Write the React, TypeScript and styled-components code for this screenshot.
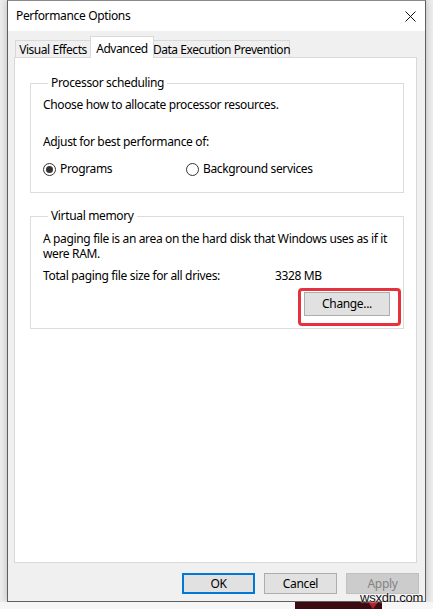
import React from "react";
import styled, { createGlobalStyle } from "styled-components";

const GlobalStyle = createGlobalStyle`
  html, body { margin: 0; padding: 0; }
  body {
    background: #ececec;
    font-family: "Noto Sans", "Liberation Sans", sans-serif;
    font-size: 12px;
    letter-spacing: -0.35px;
    color: #000;
  }
  * { box-sizing: border-box; }
`;

const Page = styled.div`
  position: relative;
  width: 433px;
  height: 609px;
  padding-left: 7px;
  display: flex;
  flex-direction: column;
  overflow: hidden;
`;

const Window = styled.div`
  width: 419px;
  height: 602px;
  border: 1px solid #5e5e5e;
  border-top-color: #8a8a8a;
  background: #f0f0f0;
  display: flex;
  flex-direction: column;
  box-shadow: 0 0 7px rgba(0, 0, 0, 0.22);
  flex: none;
`;

const TitleBar = styled.div`
  height: 30px;
  background: #fff;
  display: flex;
  align-items: center;
  justify-content: space-between;
  padding: 0 9px 0 8px;
  flex: none;
`;

const Title = styled.span`
  font-size: 12px;
  line-height: 16px;
`;

const Body = styled.div`
  padding: 6px 8px 0 6px;
  display: flex;
  flex-direction: column;
  flex: 1;
`;

const TabRow = styled.div`
  height: 21px;
  display: flex;
  align-items: flex-end;
  padding-left: 2px;
  position: relative;
  z-index: 1;
  margin-bottom: -1px;
`;

const Tab = styled.div<{ $active?: boolean; $w: number }>`
  width: ${(p) => p.$w}px;
  flex: none;
  white-space: nowrap;
  letter-spacing: -0.45px;
  height: ${(p) => (p.$active ? "22px" : "18px")};
  display: flex;
  align-items: center;
  justify-content: center;
  border: 1px solid #d9d9d9;
  border-bottom: ${(p) => (p.$active ? "none" : "1px solid #d9d9d9")};
  margin-left: -1px;
  background: ${(p) => (p.$active ? "#fff" : "#f0f0f0")};
  line-height: 16px;
  padding-top: 2px;
  position: relative;
  z-index: ${(p) => (p.$active ? 2 : 1)};
`;

const Panel = styled.div`
  height: 506px;
  background: #fff;
  border: 1px solid #d9d9d9;
  padding: 17px 12px 0 15px;
  display: flex;
  flex-direction: column;
`;

const Group = styled.fieldset<{ $gap?: number; $pt: number; $pb: number }>`
  margin: ${(p) => p.$gap ?? 0}px 0 0 0;
  border: 1px solid #dcdcdc;
  padding: ${(p) => p.$pt}px 13px ${(p) => p.$pb}px 12px;
  min-width: 0;
`;

const Legend = styled.legend`
  padding: 0 3px;
  margin-left: 5px;
  line-height: 16px;
  font-size: 12px;
`;

const Text = styled.p<{ $top?: number; $lh?: number }>`
  margin: ${(p) => p.$top ?? 0}px 0 0 0;
  line-height: ${(p) => p.$lh ?? 16}px;
`;

const RadioRow = styled.div`
  margin-top: 11px;
  display: grid;
  grid-template-columns: 143px auto;
  line-height: 16px;
`;

const RadioOption = styled.label`
  display: flex;
  align-items: center;
  gap: 4px;
`;

const RadioCircle = styled.span<{ $checked?: boolean }>`
  width: 13px;
  height: 13px;
  border-radius: 50%;
  border: 1px solid #333;
  background: #fff;
  display: flex;
  align-items: center;
  justify-content: center;
  flex: none;
  &::after {
    content: "";
    width: 7px;
    height: 7px;
    border-radius: 50%;
    background: ${(p) => (p.$checked ? "#333" : "transparent")};
  }
`;

const InfoRow = styled.div`
  margin-top: 7px;
  display: grid;
  grid-template-columns: 232px auto;
  line-height: 15px;
`;

const ButtonRow = styled.div`
  margin-top: 9px;
  display: flex;
  justify-content: flex-end;
`;

const Highlight = styled.div`
  position: relative;
  &::after {
    content: "";
    position: absolute;
    left: -6px;
    top: -4px;
    right: -11px;
    bottom: -10px;
    border: 3px solid #e5323d;
    border-radius: 4px;
    pointer-events: none;
  }
`;

const Button = styled.button<{ $w?: number; $h?: number; $default?: boolean }>`
  width: ${(p) => p.$w ?? 73}px;
  height: ${(p) => p.$h ?? 21}px;
  background: #e1e1e1;
  border: ${(p) => (p.$default ? "2px solid #0078d7" : "1px solid #adadad")};
  font-family: inherit;
  font-size: 12px;
  letter-spacing: inherit;
  color: #000;
  padding: 0;
  line-height: 16px;
  &:disabled {
    background: #cccccc;
    border-color: #bfbfbf;
    color: #838383;
  }
`;

const Footer = styled.div`
  display: flex;
  justify-content: flex-end;
  gap: 9px;
  padding: 9px 6px 7px 0;
  flex: none;
`;

const BottomStrip = styled.div`
  height: 7px;
  display: flex;
  background: #f6f6f6;
  margin-left: -7px;
  width: 433px;
`;

const DarkBlock = styled.div`
  margin-left: 295px;
  width: 87px;
  background: #3a0c12;
  position: relative;
  &::after {
    content: "";
    position: absolute;
    left: 73px;
    top: 0;
    border-left: 5px solid transparent;
    border-right: 5px solid transparent;
    border-top: 7px solid #b0202c;
  }
`;

const Watermark = styled.span`
  position: absolute;
  left: 360px;
  top: 590px;
  font-family: "Liberation Sans", Arial, sans-serif;
  font-size: 13px;
  color: #111;
  text-shadow: 0 0 2px #fff, 0 0 2px #fff;
  letter-spacing: -0.2px;
`;

const CloseIcon = () => (
  <svg width="11" height="11" viewBox="0 0 11 11">
    <path d="M0.5 0.5 L10.5 10.5 M10.5 0.5 L0.5 10.5" stroke="#111" strokeWidth="1" />
  </svg>
);

export default function App() {
  return (
    <>
      <GlobalStyle />
      <Page>
        <Window>
          <TitleBar>
            <Title>Performance Options</Title>
            <CloseIcon />
          </TitleBar>
          <Body>
            <TabRow>
              <Tab $w={76}>Visual Effects</Tab>
              <Tab $active $w={64}>Advanced</Tab>
              <Tab $w={137}>Data Execution Prevention</Tab>
            </TabRow>
            <Panel>
              <Group $pt={6} $pb={15}>
                <Legend>Processor scheduling</Legend>
                <Text>Choose how to allocate processor resources.</Text>
                <Text $top={21}>Adjust for best performance of:</Text>
                <RadioRow>
                  <RadioOption>
                    <RadioCircle $checked />
                    Programs
                  </RadioOption>
                  <RadioOption>
                    <RadioCircle />
                    Background services
                  </RadioOption>
                </RadioRow>
              </Group>
              <Group $gap={15} $pt={7} $pb={12}>
                <Legend>Virtual memory</Legend>
                <Text $lh={15}>
                  A paging file is an area on the hard disk that Windows uses as if it
                  were RAM.
                </Text>
                <InfoRow>
                  <span>Total paging file size for all drives:</span>
                  <span>3328 MB</span>
                </InfoRow>
                <ButtonRow>
                  <Highlight>
                    <Button $w={86} $h={24}>Change...</Button>
                  </Highlight>
                </ButtonRow>
              </Group>
            </Panel>
          </Body>
          <Footer>
            <Button $default>OK</Button>
            <Button>Cancel</Button>
            <Button disabled>Apply</Button>
          </Footer>
        </Window>
        <BottomStrip>
          <DarkBlock />
        </BottomStrip>
        <Watermark>wsxdn.com</Watermark>
      </Page>
    </>
  );
}
